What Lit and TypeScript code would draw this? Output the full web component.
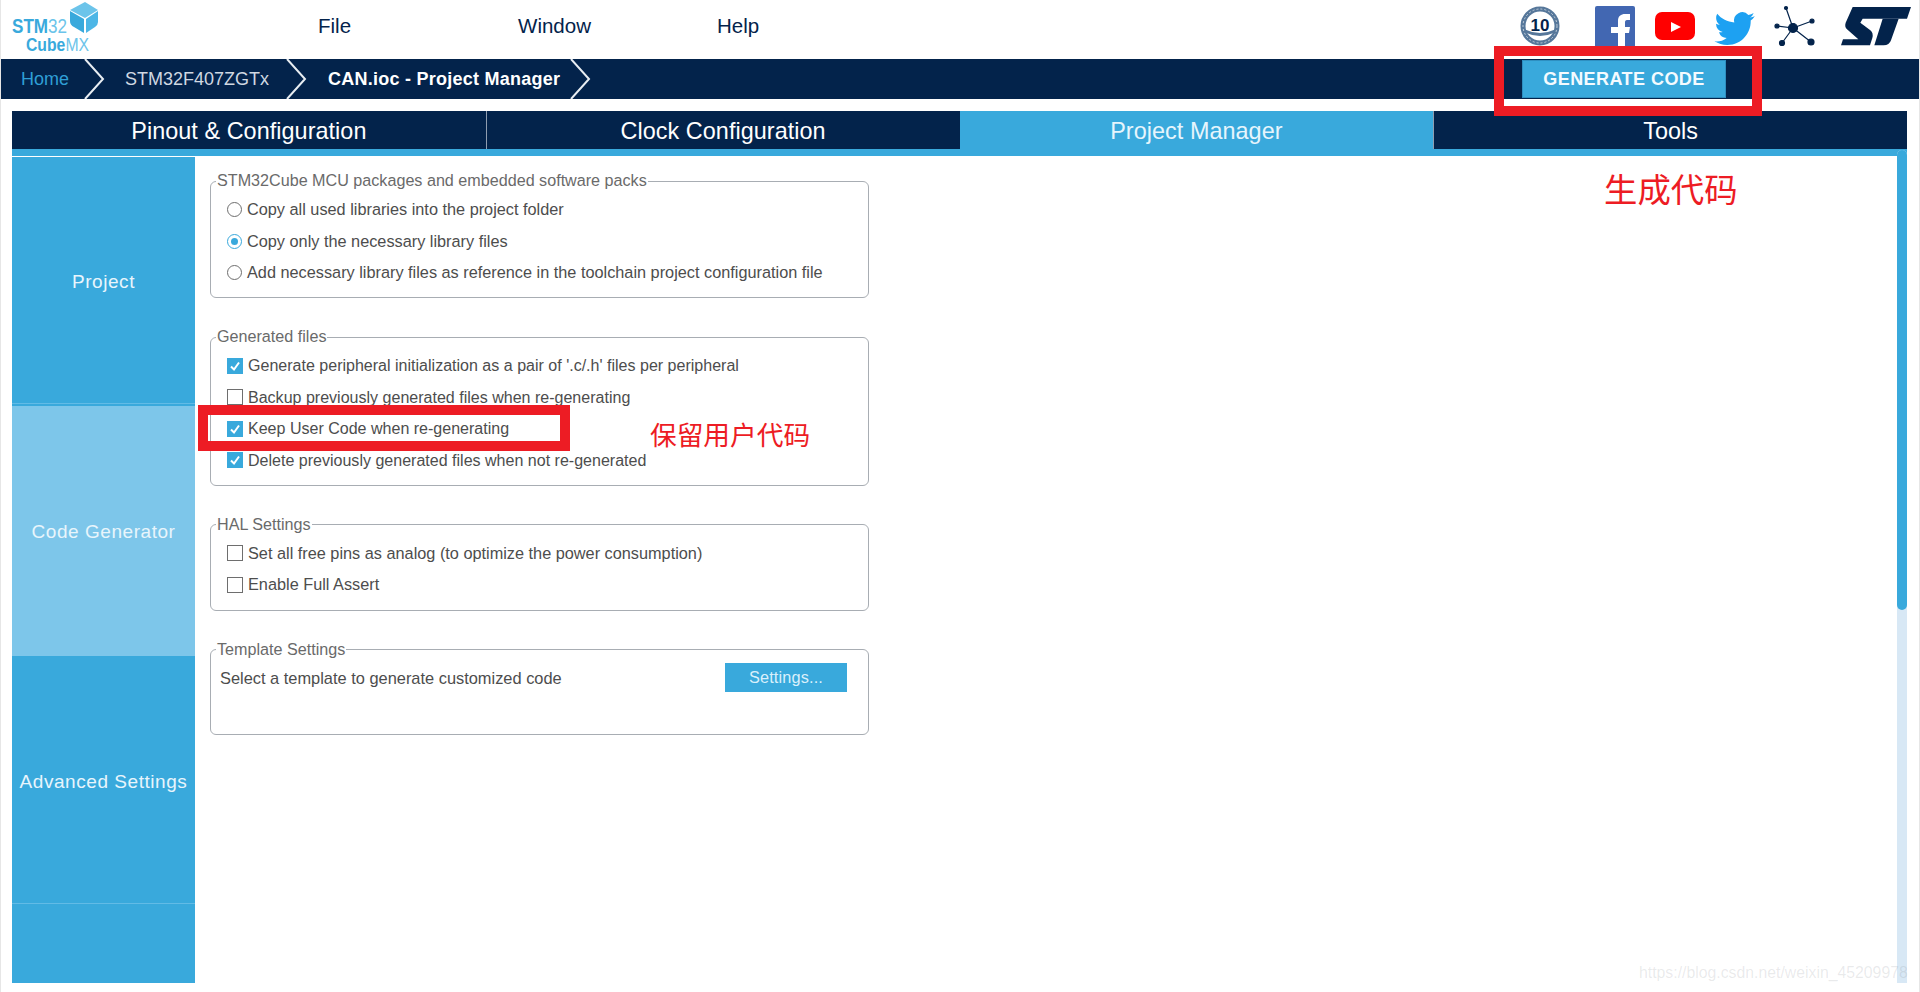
import { LitElement, html, css, svg } from "lit";
import { customElement } from "lit/decorators.js";

const radio = (on: boolean) => html`<span class="radio ${on ? "on" : ""}"></span>`;
const check = (on: boolean) => html`<span class="check ${on ? "on" : ""}">
  ${on ? svg`<svg viewBox="0 0 14 14" width="14" height="14"><path d="M3 7.5 6 10.5 11 3.5" fill="none" stroke="#fff" stroke-width="2"/></svg>` : ""}
</span>`;

@customElement("app-root")
export class AppRoot extends LitElement {
  static styles = css`
    :host { display: block; width: 1920px; height: 992px; position: relative; overflow: hidden; background: #fff;
      font-family: "Liberation Sans", Arial, sans-serif; }
    .page { display: flex; flex-direction: column; height: 992px; border-left: 1px solid #e6e6e6; border-right: 1px solid #e6e6e6; box-sizing: border-box; }
    .head { height: 59px; display: flex; align-items: center; flex: none; }
    .logo { width: 99px; height: 59px; margin-left: 1px; flex: none; }
    .menu { display: flex; font-size: 20.5px; color: #03234b; flex: none; margin-top: -8px; }
    .menu span { display: block; }
    .m1 { margin-left: 217px; } .m2 { margin-left: 167px; } .m3 { margin-left: 126px; }
    .icons { margin-left: auto; display: flex; align-items: flex-start; height: 59px; flex: none; }
    .crumbs { height: 40px; background: #03234b; flex: none; display: flex; align-items: center; position: relative; font-size: 18px; }
    .crumbs .c { flex: none; }
    .home { margin-left: 20px; color: #2f9fd6; width: 104px; }
    .mcu { color: #d0d8e2; width: 203px; }
    .cur { color: #fff; font-weight: 700; letter-spacing: .25px; }
    .chev { position: absolute; top: 0; width: 22px; height: 40px; }
    .gen { margin-left: auto; margin-right: 193px; width: 204px; height: 38px; box-sizing: border-box; border: 1px solid #2f8fc0; background: #39a9dc; color: #f4fbff;
      font-weight: 700; font-size: 18px; letter-spacing: .45px; display: flex; align-items: center; justify-content: center; flex: none; }
    .tabs { margin: 12px 12px 0 11px; height: 38px; display: grid; grid-template-columns: repeat(4, 1fr); background: #03234b; flex: none; font-size: 23.4px; letter-spacing: .05px; color: #fff; }
    .tabs div { display: flex; align-items: center; justify-content: center; border-left: 1px solid #8f9db0; padding-top: 3px; box-sizing: border-box; }
    .tabs div:first-child { border-left: 0; }
    .tabs .act { background: #39a9dc; color: #e6f5fc; border-left: 0; }
    .strip { margin: 0 12px 0 11px; height: 7px; background: #39a9dc; flex: none; }
    .body { margin: 1px 12px 0 11px; height: 826px; flex: none; display: flex; position: relative; }
    .side { width: 183px; flex: none; display: flex; flex-direction: column; background: #39a9dc; color: #e8f5fc; font-size: 19px; letter-spacing: .55px; text-align: center; }
    .side div { display: flex; align-items: center; justify-content: center; flex: none; box-sizing: border-box; }
    .s1 { height: 247px; padding-top: 4px; border-bottom: 1px solid #62bbe6; }
    .s2 { height: 252px; padding-top: 2px; background: #7dc6ea; background-clip: padding-box; border-top: 2px solid #39a9dc; }
    .s3 { height: 247px; padding-top: 4px; }
    .s4 { height: 80px; border-top: 1px solid #62bbe6; }
    .main { flex: 1; padding: 15px 0 0 15px; display: flex; flex-direction: column; align-items: flex-start; }
    fieldset { width: 659px; box-sizing: border-box; margin: 0 0 30px; padding: 4px 8px 9px 16px; border: 1.5px solid #a8adb3; border-radius: 6px; min-width: 0; color: #505050; font-size: 16.3px; }
    fieldset.g2 { font-size: 16.05px; }
    legend { padding: 0 1px; margin-left: -11px; line-height: 18px; color: #6a6a6a; font-size: 16.15px; position: relative; top: -1px; }
    .row { height: 31.4px; display: flex; align-items: center; gap: 5px; color: #4d4d4d; white-space: nowrap; }
    .radio { width: 13px; height: 13px; border: 1.5px solid #6e6e6e; border-radius: 50%; flex: none; box-sizing: content-box; position: relative; }
    .radio.on { border-color: #39a9dc; }
    .radio.on::after { content: ""; position: absolute; inset: 3px; border-radius: 50%; background: #39a9dc; }
    .check { width: 14px; height: 14px; border: 1px solid #6e6e6e; flex: none; display: block; background: #fff; }
    .check.on { border-color: #39a9dc; background: #39a9dc; }
    .check svg { display: block; }
    .tpl { display: flex; align-items: flex-start; height: 62.5px; box-sizing: border-box; margin-left: -7px; color: #4d4d4d; }
    .tpl .t { margin-top: 6px; white-space: nowrap; font-size: 16.4px; }
    .settings { margin-left: auto; margin-right: 13px; width: 122px; height: 29px; background: #39a9dc; color: #d9f0fb; display: flex; align-items: center; justify-content: center; letter-spacing: .15px; }
    .scroll { position: absolute; top: -7px; right: 0; bottom: 0; width: 10px; background: #d8e8f5; border-radius: 5px 5px 0 0; }
    .thumb { height: 460px; background: #39a9dc; border-radius: 5px; }
    .rect { position: absolute; border: 10px solid #ed1c24; box-sizing: border-box; }
    .r1 { left: 1494px; top: 46px; width: 268px; height: 70px; }
    .r2 { left: 198px; top: 405px; width: 372px; height: 46px; }
    .note { position: absolute; color: #ed1c24; font-family: "Noto Sans CJK SC", sans-serif; white-space: nowrap; line-height: 1; }
    .n1 { left: 1604px; top: 171px; font-size: 33.4px; }
    .n2 { left: 650px; top: 421px; font-size: 26.7px; }
    .wm { position: absolute; left: 1639px; top: 964px; font-size: 15.8px; color: rgba(120,125,130,.16); font-family: "Liberation Sans", sans-serif; white-space: nowrap; }
    svg { display: block; }
    .i { flex: none; }
  `;

  logo() {
    return html`<svg class="logo" viewBox="0 0 99 59" width="99" height="59">
      <path d="M68 10 83 2 96 10 83 18Z" fill="#6cc4ea"/>
      <path d="M68 11 82 19V33L72 27Q68 25 68 21Z" fill="#39a9dc"/>
      <path d="M84 19 96 11V22Q96 25 93 27L84 33Z" fill="#4db6e6"/>
      <text x="10" y="33" font-family="Liberation Sans" font-size="21" fill="#6cc4ea" textLength="55" lengthAdjust="spacingAndGlyphs"><tspan font-weight="700" fill="#39a9dc">STM</tspan>32</text>
      <text x="24" y="51" font-family="Liberation Sans" font-size="19" fill="#6cc4ea" textLength="63" lengthAdjust="spacingAndGlyphs"><tspan font-weight="700" fill="#39a9dc">Cube</tspan>MX</text>
    </svg>`;
  }

  icons() {
    return html`<svg class="i" viewBox="1500 0 418 59" width="418" height="59">
      <g>
        <circle cx="1539" cy="26" r="17" fill="#fff" stroke="#56779a" stroke-width="5"/>
        <circle cx="1539" cy="26" r="17" fill="none" stroke="#c4d0dc" stroke-width="1" stroke-dasharray="2 2"/>
        <path d="M1524 31Q1539 38 1554 31" fill="none" stroke="#56779a" stroke-width="3"/>
        <text x="1539" y="31" text-anchor="middle" font-family="Liberation Sans" font-weight="700" font-size="17" fill="#03234b">10</text>
      </g>
      <rect x="1594" y="6" width="40" height="44" rx="2" fill="#4267b2"/>
      <path d="M1617 50V33H1610V27H1617V21C1617 16 1620 14 1624 14H1629V20H1626C1624.500 20 1624 21 1624 22.500V27H1629L1628 33H1624V50Z" fill="#fff"/>
      <rect x="1654" y="12" width="40" height="28" rx="7" fill="#f00"/>
      <path d="M1670 22 1680 27 1670 32Z" fill="#fff"/>
      <g transform="translate(1713.500 8.500) scale(1.68)"><path fill="#1da1f2" d="M23.953 4.57a10 10 0 01-2.825.775 4.958 4.958 0 002.163-2.723c-.951.555-2.005.959-3.127 1.184a4.92 4.92 0 00-8.384 4.482C7.69 8.095 4.067 6.13 1.64 3.162a4.822 4.822 0 00-.666 2.475c0 1.71.87 3.213 2.188 4.096a4.904 4.904 0 01-2.228-.616v.06a4.923 4.923 0 003.946 4.827 4.996 4.996 0 01-2.212.085 4.936 4.936 0 004.604 3.417 9.867 9.867 0 01-6.102 2.105c-.39 0-.779-.023-1.17-.067a13.995 13.995 0 007.557 2.209c9.053 0 13.998-7.496 13.998-13.985 0-.21 0-.42-.015-.63A9.935 9.935 0 0024 4.59z"/></g>
      <g stroke="#03234b" stroke-width="1.2" fill="#03234b">
        <path d="M1792 28 1785 8M1792 28 1811 21M1792 28 1810 42M1792 28 1781 43M1792 28 1776 26" fill="none"/>
        <circle cx="1792" cy="28" r="4.500"/><circle cx="1785" cy="8" r="1.500"/><circle cx="1811" cy="21" r="2"/>
        <circle cx="1810" cy="42" r="3"/><circle cx="1781" cy="43" r="2.500"/><circle cx="1776" cy="26" r="2"/>
      </g>
      <g transform="translate(1830 2) scale(.3333)" fill="#03234b">
        <path d="M65 15H240L228 50H95L88 62 118 85Q128 93 124 108L117 130H30L36 112H82L48 82Q40 74 44 62Z"/>
        <path d="M155 50H203L180 115Q175 130 158 130H130Z"/>
      </g>
    </svg>`;
  }

  render() {
    const chev = (x: number) => svg`<svg class="chev" style="left:${x}px" viewBox="0 0 22 40"><path d="M1 0 19 20 1 40" fill="none" stroke="#e8edf2" stroke-width="2"/></svg>`;
    return html`
      <div class="page">
        <div class="head">
          ${this.logo()}
          <div class="menu"><span class="m1">File</span><span class="m2">Window</span><span class="m3">Help</span></div>
          <div class="icons">${this.icons()}</div>
        </div>
        <div class="crumbs">
          <span class="c home">Home</span><span class="c mcu">STM32F407ZGTx</span><span class="c cur">CAN.ioc - Project Manager</span>
          ${chev(83)}${chev(285)}${chev(569)}
          <div class="gen">GENERATE CODE</div>
        </div>
        <div class="tabs"><div>Pinout &amp; Configuration</div><div>Clock Configuration</div><div class="act">Project Manager</div><div>Tools</div></div>
        <div class="strip"></div>
        <div class="body">
          <div class="side">
            <div class="s1">Project</div>
            <div class="s2">Code Generator</div>
            <div class="s3">Advanced Settings</div>
            <div class="s4"></div>
          </div>
          <div class="main">
            <fieldset><legend>STM32Cube MCU packages and embedded software packs</legend>
              <div class="row">${radio(false)}Copy all used libraries into the project folder</div>
              <div class="row">${radio(true)}Copy only the necessary library files</div>
              <div class="row">${radio(false)}Add necessary library files as reference in the toolchain project configuration file</div>
            </fieldset>
            <fieldset class="g2"><legend>Generated files</legend>
              <div class="row">${check(true)}Generate peripheral initialization as a pair of '.c/.h' files per peripheral</div>
              <div class="row">${check(false)}Backup previously generated files when re-generating</div>
              <div class="row">${check(true)}Keep User Code when re-generating</div>
              <div class="row">${check(true)}Delete previously generated files when not re-generated</div>
            </fieldset>
            <fieldset><legend>HAL Settings</legend>
              <div class="row">${check(false)}Set all free pins as analog (to optimize the power consumption)</div>
              <div class="row">${check(false)}Enable Full Assert</div>
            </fieldset>
            <fieldset><legend>Template Settings</legend>
              <div class="tpl"><span class="t">Select a template to generate customized code</span><div class="settings">Settings...</div></div>
            </fieldset>
          </div>
          <div class="scroll"><div class="thumb"></div></div>
        </div>
      </div>
      <div class="rect r1"></div><div class="rect r2"></div>
      <div class="note n1">生成代码</div><div class="note n2">保留用户代码</div>
      <div class="wm">https://blog.csdn.net/weixin_45209978</div>
    `;
  }
}
